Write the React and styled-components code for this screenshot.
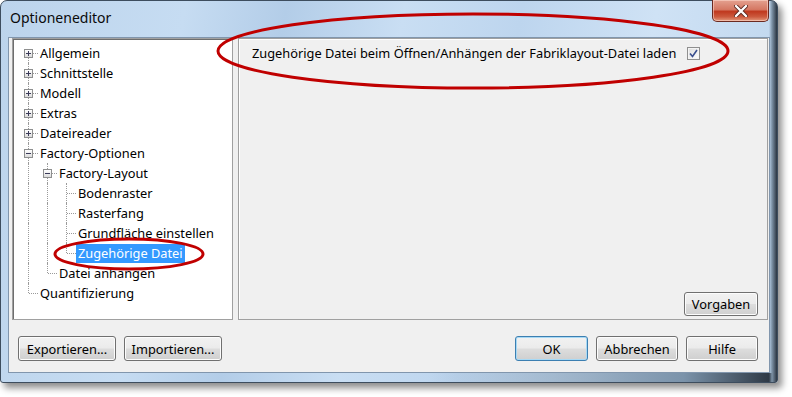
import styled, { createGlobalStyle, css } from "styled-components";

const GlobalStyle = createGlobalStyle`
  html, body {
    margin: 0;
    padding: 0;
    background: #ffffff;
  }
  body {
    font-family: "Noto Sans", "DejaVu Sans", sans-serif;
    font-size: 12px;
    color: #000;
  }
`;

const Page = styled.div`
  position: relative;
  width: 792px;
  height: 397px;
  overflow: hidden;
`;

const Window = styled.div`
  width: 778px;
  height: 383px;
  box-sizing: border-box;
  display: flex;
  flex-direction: column;
  padding: 0 7px 9px 7px;
  border: 1px solid #3d4d5e;
  border-radius: 7px 7px 3px 3px;
  background:
    linear-gradient(to right, rgba(0,0,0,0) calc(100% - 8px), #7d92a6 calc(100% - 5px), #2a3440 100%),
    linear-gradient(to right, rgba(0,0,0,0) 55%, #7b93aa 88%, #27313c 100%) bottom / 100% 9px no-repeat,
    linear-gradient(100deg, #bcd4ec 0%, #c6dcf2 22%, #b3cde8 34%, #c9def3 48%, #bdd5ee 62%, #cfe2f5 78%, #bcd4ec 100%);
  box-shadow: 4px 5px 7px rgba(0, 0, 0, 0.45);
`;

const TitleBar = styled.div`
  height: 36px;
  display: flex;
  align-items: flex-start;
  justify-content: space-between;
`;

const Title = styled.div`
  font-family: "Noto Sans", sans-serif;
  font-size: 14px;
  padding: 7px 0 0 2px;
  color: #0a0a0a;
`;

const CloseButton = styled.div`
  width: 57px;
  height: 22px;
  margin: -1px 1px 0 0;
  box-sizing: border-box;
  border: 1px solid #6b2a21;
  border-top: none;
  border-radius: 0 0 5px 5px;
  background: linear-gradient(#e4a190 0%, #d57863 45%, #c0391f 55%, #cc5a3e 80%, #e39a7d 100%);
  box-shadow: inset 0 0 0 1px rgba(255, 220, 210, 0.55);
  display: flex;
  align-items: center;
  justify-content: center;
`;

const Client = styled.div`
  flex: 1;
  display: flex;
  flex-direction: column;
  background: #f0f0f0;
  border: 1px solid #8196ad;
  padding: 0 0 0 3px;
`;

const MainRow = styled.div`
  display: flex;
  gap: 5px;
  height: 282px;
  margin-right: 1px;
`;

const TreePanel = styled.div`
  width: 221px;
  box-sizing: border-box;
  background: #ffffff;
  border: 1px solid #a0a0a0;
  box-shadow: inset 1px 1px 0 #6e6e6e;
  padding: 4px 0 0 6px;
`;

const TreeRow = styled.div`
  display: flex;
  height: 20px;
  align-items: center;
`;

const dotV = css`
  border-left: 1px dotted #9a9a9a;
`;

const Guide = styled.div`
  width: 19px;
  height: 20px;
  position: relative;
  flex-shrink: 0;
  &::before {
    content: "";
    display: ${p => (p.$line ? "block" : "none")};
    position: absolute;
    left: 9px;
    top: 0;
    bottom: 0;
    ${dotV}
  }
`;

const Joint = styled.div`
  width: 19px;
  height: 20px;
  position: relative;
  flex-shrink: 0;
  &::before {
    content: "";
    position: absolute;
    left: 9px;
    top: ${p => (p.$top ? "0" : "10px")};
    bottom: ${p => (p.$bottom ? "0" : "10px")};
    ${dotV}
  }
  &::after {
    content: "";
    position: absolute;
    left: 10px;
    right: 0;
    top: 10px;
    border-top: 1px dotted #9a9a9a;
  }
`;

const ExpandBox = styled.div`
  position: absolute;
  left: 5px;
  top: 6px;
  width: 9px;
  height: 9px;
  box-sizing: border-box;
  border: 1px solid #8e8f8f;
  background: linear-gradient(#ffffff, #dcdcdc);
  z-index: 1;
  &::before {
    content: "";
    position: absolute;
    left: 1px;
    top: 3px;
    width: 5px;
    height: 1px;
    background: #3b3b5a;
  }
  &::after {
    content: "";
    display: ${p => (p.$open ? "none" : "block")};
    position: absolute;
    left: 3px;
    top: 1px;
    width: 1px;
    height: 5px;
    background: #3b3b5a;
  }
`;

const Label = styled.span`
  padding: 0 2px;
  line-height: 19px;
  white-space: nowrap;
  font-size: 12.8px;
  background: ${p => (p.$selected ? "#3399ff" : "transparent")};
  color: ${p => (p.$selected ? "#ffffff" : "#000000")};
`;

const OptionsPanel = styled.div`
  flex: 1;
  display: flex;
  flex-direction: column;
  justify-content: space-between;
  background: #f0f0f0;
  border: 1px solid #a0a0a0;
  box-shadow: inset 1px 1px 0 #ffffff;
  padding: 5px 9px 3px 13px;
`;

const OptionLine = styled.label`
  display: flex;
  align-items: center;
  gap: 11px;
  height: 18px;
  font-size: 12.8px;
`;

const CheckBox = styled.span`
  width: 13px;
  height: 13px;
  box-sizing: border-box;
  border: 1px solid #8f8f8f;
  background: linear-gradient(135deg, #dcdcdc, #ffffff);
  box-shadow: inset 0 0 0 1px #f4f4f4;
  display: flex;
  align-items: center;
  justify-content: center;
`;

const PanelFooter = styled.div`
  display: flex;
  justify-content: flex-end;
`;

const ButtonRow = styled.div`
  display: flex;
  align-items: center;
  gap: 8px;
  padding: 16px 11px 0 6px;
`;

const Spacer = styled.div`
  flex: 1;
`;

const Button = styled.button`
  width: ${p => p.$w}px;
  height: ${p => p.$h || 25}px;
  box-sizing: border-box;
  font-family: "Noto Sans", sans-serif;
  font-size: 12.8px;
  color: #000;
  padding: 0;
  border: 1px solid ${p => (p.$default ? "#3c7fb1" : "#707070")};
  border-radius: 3px;
  background: linear-gradient(#f2f2f2 0%, #ebebeb 48%, #dddddd 52%, #cfcfcf 100%);
  box-shadow: inset 0 0 0 1px ${p => (p.$default ? "#a7d9f5" : "#fcfcfc")};
`;

const tree = [
  { label: "Allgemein", guides: [], top: false, bottom: true, box: "closed" },
  { label: "Schnittstelle", guides: [], top: true, bottom: true, box: "closed" },
  { label: "Modell", guides: [], top: true, bottom: true, box: "closed" },
  { label: "Extras", guides: [], top: true, bottom: true, box: "closed" },
  { label: "Dateireader", guides: [], top: true, bottom: true, box: "closed" },
  { label: "Factory-Optionen", guides: [], top: true, bottom: true, box: "open" },
  { label: "Factory-Layout", guides: [true], top: true, bottom: true, box: "open" },
  { label: "Bodenraster", guides: [true, true], top: true, bottom: true },
  { label: "Rasterfang", guides: [true, true], top: true, bottom: true },
  { label: "Grundfläche einstellen", guides: [true, true], top: true, bottom: true },
  { label: "Zugehörige Datei", guides: [true, true], top: true, bottom: false, selected: true },
  { label: "Datei anhängen", guides: [true], top: true, bottom: false },
  { label: "Quantifizierung", guides: [], top: true, bottom: false },
];

function Annotations() {
  return (
    <svg
      width="792"
      height="397"
      style={{ position: "absolute", left: 0, top: 0, pointerEvents: "none" }}
    >
      <ellipse cx="473" cy="51" rx="255" ry="37" fill="none" stroke="#c00000" strokeWidth="3" />
      <ellipse cx="129" cy="254" rx="74" ry="15" fill="none" stroke="#c00000" strokeWidth="3" />
    </svg>
  );
}

export default function App() {
  return (
    <Page>
      <GlobalStyle />
      <Window>
        <TitleBar>
          <Title>Optioneneditor</Title>
          <CloseButton>
            <svg width="14" height="12" viewBox="0 0 14 12">
              <path d="M2 1 L12 11 M12 1 L2 11" stroke="#5a2a22" strokeWidth="4" strokeLinecap="round" />
              <path d="M2 1 L12 11 M12 1 L2 11" stroke="#ffffff" strokeWidth="2.4" strokeLinecap="round" />
            </svg>
          </CloseButton>
        </TitleBar>
        <Client>
          <MainRow>
            <TreePanel>
              {tree.map(item => (
                <TreeRow key={item.label}>
                  {item.guides.map((g, i) => (
                    <Guide key={i} $line={g} />
                  ))}
                  <Joint $top={item.top} $bottom={item.bottom}>
                    {item.box && <ExpandBox $open={item.box === "open"} />}
                  </Joint>
                  <Label $selected={item.selected}>{item.label}</Label>
                </TreeRow>
              ))}
            </TreePanel>
            <OptionsPanel>
              <OptionLine>
                Zugehörige Datei beim Öffnen/Anhängen der Fabriklayout-Datei laden
                <CheckBox>
                  <svg width="9" height="9" viewBox="0 0 9 9">
                    <path d="M1 4.5 L3.5 7.5 L8 1" fill="none" stroke="#3a4f8e" strokeWidth="1.6" />
                  </svg>
                </CheckBox>
              </OptionLine>
              <PanelFooter>
                <Button $w={74} $h={24}>Vorgaben</Button>
              </PanelFooter>
            </OptionsPanel>
          </MainRow>
          <ButtonRow>
            <Button $w={98}>Exportieren...</Button>
            <Button $w={98}>Importieren...</Button>
            <Spacer />
            <Button $w={73} $default>OK</Button>
            <Button $w={82}>Abbrechen</Button>
            <Button $w={72}>Hilfe</Button>
          </ButtonRow>
        </Client>
      </Window>
      <Annotations />
    </Page>
  );
}
